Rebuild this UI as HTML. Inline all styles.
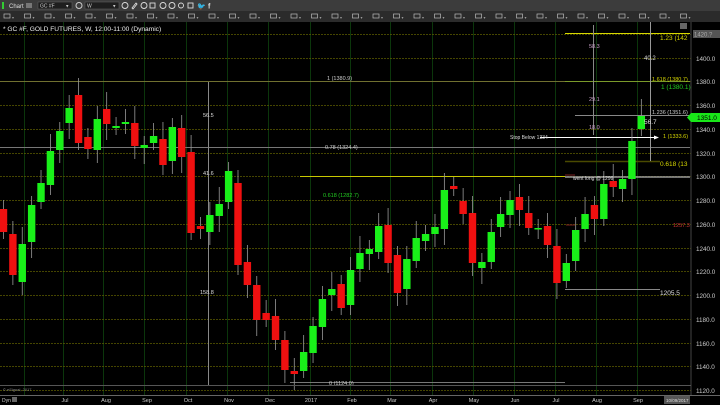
<!DOCTYPE html><html><head><meta charset="utf-8"><style>
html,body{margin:0;padding:0;background:#000;width:720px;height:405px;overflow:hidden;font-family:"Liberation Sans",sans-serif}
svg{display:block}
</style></head><body>
<svg id="s" width="720" height="405" xmlns="http://www.w3.org/2000/svg" font-family="Liberation Sans, sans-serif">
<rect width="720" height="405" fill="#000"/>
<g id="grid"></g>
<g id="fib"></g>
<g id="c"></g>
<g id="lab"></g>
<!-- toolbars -->
<rect x="0" y="0" width="720" height="11" fill="#3c3c3c"/>
<rect x="0" y="11" width="720" height="11" fill="#2b2b2b"/>
<rect x="2" y="2" width="2" height="7" fill="#3c3"/>
<text x="9" y="8" font-size="6" fill="#ddd">Chart</text>
<rect x="26" y="3" width="6" height="5" fill="#777"/>
<rect x="38" y="2" width="34" height="7" fill="#1e1e1e" stroke="#666" stroke-width="0.5"/>
<text x="40" y="7.5" font-size="5" fill="#ccc">GC #F</text>
<text x="66" y="7.5" font-size="5" fill="#ccc">▾</text>
<circle cx="79" cy="5.5" r="3" fill="none" stroke="#ccc" stroke-width="1"/>
<rect x="85" y="2" width="34" height="7" fill="#1e1e1e" stroke="#666" stroke-width="0.5"/>
<text x="87" y="7.5" font-size="5" fill="#ccc">W</text>
<text x="113" y="7.5" font-size="5" fill="#ccc">▾</text>
<g fill="none" stroke="#ddd" stroke-width="0.9">
<circle cx="125" cy="5.5" r="3"/><circle cx="144" cy="5.5" r="3"/><circle cx="163" cy="5.5" r="3"/><circle cx="172" cy="5.5" r="3"/><circle cx="181" cy="5.5" r="2.5"/>
<path d="M132 8l4-5 1 1-4 5z"/><rect x="150" y="3" width="5" height="5"/><rect x="188" y="3" width="5" height="5"/>
</g>
<text x="197" y="8.5" font-size="7" fill="#ddd">🐦</text><text x="208" y="8.5" font-size="7" fill="#ddd" font-weight="bold">f</text>
<g id="tb"></g>
<text x="3" y="31" font-size="6.6" fill="#eee">* GC #F, GOLD FUTURES, W, 12:00-11:00 (Dynamic)</text>
<line x1="691" y1="22" x2="691" y2="395" stroke="#444"/>
<line x1="0" y1="395.5" x2="720" y2="395.5" stroke="#666"/>
<line x1="0" y1="385.5" x2="691" y2="385.5" stroke="#555"/>
<text x="3" y="391" font-size="4" fill="#888">© eSignal, 2017</text>
<text x="2" y="402" font-size="5" fill="#ccc">Dyn</text><rect x="12" y="397" width="5" height="5" fill="#666"/>
<rect x="664" y="396" width="26" height="8" fill="#555"/>
<text x="666" y="402" font-size="4.5" fill="#ddd">10/09/2017</text>
<rect x="691" y="113" width="29" height="9" fill="#19e619"/>
<polygon points="687,117.5 691,113 691,122" fill="#19e619"/>
<text x="697" y="120" font-size="6.5" fill="#000">1351.0</text>
<rect x="693" y="30" width="27" height="8" fill="#555"/>
<text x="694" y="36.5" font-size="6" fill="#aaa">1420.?</text>
<rect x="680" y="23" width="7" height="6" fill="#666"/>
</svg>
<script>
const NS="http://www.w3.org/2000/svg";
function el(p,t,a,txt){const e=document.createElementNS(NS,t);for(const k in a)e.setAttribute(k,a[k]);if(txt)e.textContent=txt;document.getElementById(p).appendChild(e);return e;}
const Y=p=>390-(p-1120)*1.1875;
// grid
[24,63,103,144,186,227,268,310,350,390,432,473,514,555,596,637].forEach(x=>el('grid','line',{x1:x+.5,y1:22,x2:x+.5,y2:395,stroke:'#0b360b','stroke-width':1}));
for(let p=1120;p<=1420;p+=20){const y=Math.round(Y(p))+.5;el('grid','line',{x1:0,y1:y,x2:691,y2:y,stroke:'#5c5c00','stroke-width':0.8,'stroke-dasharray':'2,1'});
 if(p<=1400)el('lab','text',{x:696,y:y+2.5,'font-size':6.3,fill:'#ccc'},p.toFixed(1));}
// months
[['Jul',65],['Aug',106],['Sep',147],['Oct',188],['Nov',229],['Dec',270],['2017',311],['Feb',352],['Mar',392],['Apr',433],['May',474],['Jun',515],['Jul',556],['Aug',597],['Sep',638]].forEach(m=>el('lab','text',{x:m[1],y:402,'font-size':5.5,fill:'#ccc','text-anchor':'middle'},m[0]));
// toolbar icons
for(let i=0;i<34;i++){const x=4+i*20.5;el('tb','rect',{x:x,y:14,width:6,height:4,fill:'none',stroke:'#bbb','stroke-width':0.7});el('tb','text',{x:x+8,y:19,'font-size':4,fill:'#999'},'▾');}
// fib / annotation lines
function L(x1,y1,x2,y2,c,w){el('fib','line',{x1,y1,x2,y2,stroke:c,'stroke-width':w||1});}
L(565,33.5,690,33.5,'#d8d800');
L(0,81.5,690,81.5,'#707030');L(565,81.5,690,81.5,'#7a9a2a');
L(575,115.5,690,115.5,'#888');
L(0,147.5,690,147.5,'#777');
L(565,161.5,660,161.5,'#4a4a00',1.5);
L(300,176.5,565,176.5,'#c8c800');L(565,177,690,177,'#999',1.5);
L(565,289.5,660,289.5,'#888');
L(290,382.5,565,382.5,'#777');
L(208.5,82,208.5,385,'#888');L(593.5,25,593.5,135,'#888');L(650.5,22,650.5,161,'#999');
L(540,137.5,655,137.5,'#fff');el('fib','polygon',{points:'659,137.5 654,135.5 654,139.5',fill:'#fff'});
L(566,225,575,225,'#7a2020');L(565,175,575,175,'#7a2020');
function T(x,y,s,c,sz){el('lab','text',{x,y,'font-size':sz||5.5,fill:c},s);}
T(660,40,'1.23 (142','#d8d800',6.5);T(589,48,'58.3','#c8a0c8');T(644,60,'40.2','#ddd',6);
T(652,81,'1.618 (1380.7)','#d8d800');T(661,89,'1 (1380.1)','#2c2',6.5);T(327,80,'1 (1380.9)','#ccc');
T(589,101,'29.1','#c8a0c8');T(652,114,'1.236 (1351.6)','#ccc');T(644,124,'56.7','#ddd',6.5);
T(589,129,'18.0','#c8a0c8');T(510,139,'Stop Below 1334','#ddd',5);T(663,138,'1 (1333.6)','#d8d800');
T(325,149,'0.78 (1324.4)','#ccc');T(660,166,'0.618 (13','#d8d800',6.5);T(573,180,'went long @ 1299','#ddd',5);
T(323,197,'0.618 (1282.7)','#2c2');T(673,227,'1257.3','#c33');T(660,295,'1205.5','#ddd',6.5);
T(329,385,'0 (1124.0)','#ccc');T(203,117,'56.5','#ddd');T(203,175,'41.6','#ddd');T(200,294,'158.8','#ddd');
// candles [top,bottom,color]
const C=[[209,232,0],[234,275,0],[244,282,1],[205,242,1],[183,202,1],[151,185,1],[131,150,1],[108,123,1],[95,143,0],[137,149,0],[119,150,1],[109,124,0],[126,128,1],[122,124,1],[123,146,0],[145,148,1],[136,143,1],[139,165,0],[127,161,1],[128,157,0],[152,233,0],[226,229,0],[215,232,1],[204,216,1],[171,202,1],[183,265,0],[262,285,0],[285,320,0],[313,320,0],[316,340,0],[340,370,0],[371,374,0],[352,371,1],[326,353,1],[299,327,1],
[289,295,1],[284,308,0],[270,305,1],[253,269,1],[249,254,1],[226,252,1],[225,263,0],[255,293,0],[259,289,1],[238,261,1],[234,241,1],[227,234,1],[190,229,1],[186,189,0],[201,214,0],[213,263,0],[262,268,1],[232,262,1],[214,227,1],[200,215,1],[197,210,0],[213,228,0],[228,229,2],[226,245,0],[246,283,0],[263,281,1],[230,261,1],[214,229,1],[205,219,0],[184,219,1],[181,187,0],[179,189,1],[141,179,1],[116,129,1]];
C.forEach((c,i)=>{const x=3.5+9.38*i;const h=c[0]-9-(i%3)*4,l=c[1]+7+(i%4)*3;
 el('c','line',{x1:x,y1:h,x2:x,y2:l,stroke:'#999','stroke-width':0.8});
 el('c','rect',{x:x-3.7,y:c[0],width:7.4,height:Math.max(1.5,c[1]-c[0]),fill:c[2]==1?'#19f019':c[2]==0?'#f01010':'#19f019'});});
</script>
</body></html>
